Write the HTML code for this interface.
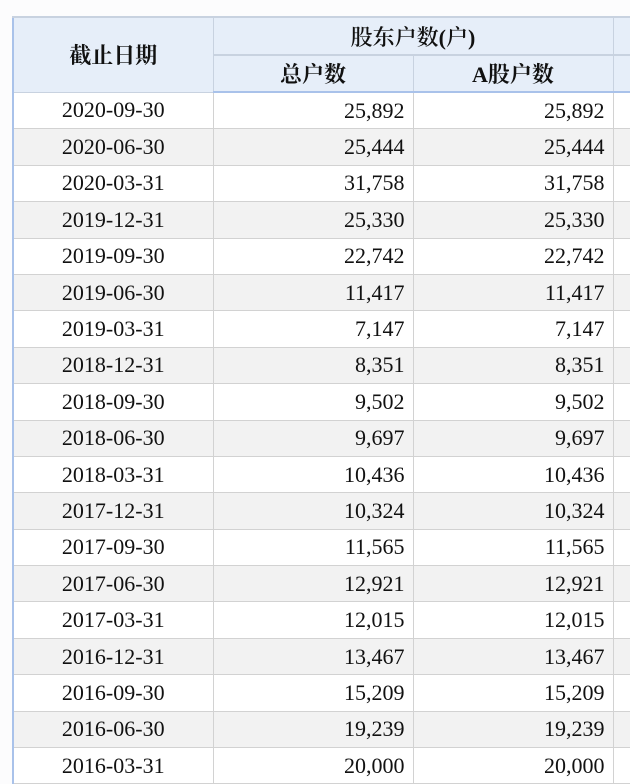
<!DOCTYPE html>
<html><head><meta charset="utf-8"><style>
body{margin:0;width:630px;height:755px;overflow:hidden;background:#fcfcfd;font-family:"Liberation Serif","Noto Serif CJK SC",serif;color:#111}
table{position:absolute;left:12px;top:16px;width:660px;border-collapse:collapse;table-layout:fixed;border-left:2px solid #a9c2ea}
td,th{border:1px solid #d2d2d2;font-size:22px;padding:0;overflow:hidden;white-space:nowrap}
th{background:#e6eef9;font-family:"Liberation Serif","Noto Serif CJK SC",serif;font-weight:bold;font-size:22px;border-top:2px solid #a9c2ea;border-color:#c8d2e0}
thead tr:last-child th{border-bottom:2px solid #a9c2ea}
td{height:35.4px;text-align:right;padding-right:8px}
td.d{text-align:center;padding-right:0}
tbody tr:nth-child(even) td{background:#f2f2f2}
tbody tr:nth-child(odd) td{background:#fff}
</style></head><body>
<table>
<colgroup><col style="width:200px"><col style="width:200px"><col style="width:200px"><col style="width:60px"></colgroup>
<thead>
<tr style="height:38px"><th rowspan="2">截止日期</th><th colspan="2" style="font-weight:600">股东户数(户)</th><th></th></tr>
<tr style="height:37px"><th>总户数</th><th>A股户数</th><th></th></tr>
</thead>
<tbody>
<tr><td class="d">2020-09-30</td><td>25,892</td><td>25,892</td><td></td></tr>
<tr><td class="d">2020-06-30</td><td>25,444</td><td>25,444</td><td></td></tr>
<tr><td class="d">2020-03-31</td><td>31,758</td><td>31,758</td><td></td></tr>
<tr><td class="d">2019-12-31</td><td>25,330</td><td>25,330</td><td></td></tr>
<tr><td class="d">2019-09-30</td><td>22,742</td><td>22,742</td><td></td></tr>
<tr><td class="d">2019-06-30</td><td>11,417</td><td>11,417</td><td></td></tr>
<tr><td class="d">2019-03-31</td><td>7,147</td><td>7,147</td><td></td></tr>
<tr><td class="d">2018-12-31</td><td>8,351</td><td>8,351</td><td></td></tr>
<tr><td class="d">2018-09-30</td><td>9,502</td><td>9,502</td><td></td></tr>
<tr><td class="d">2018-06-30</td><td>9,697</td><td>9,697</td><td></td></tr>
<tr><td class="d">2018-03-31</td><td>10,436</td><td>10,436</td><td></td></tr>
<tr><td class="d">2017-12-31</td><td>10,324</td><td>10,324</td><td></td></tr>
<tr><td class="d">2017-09-30</td><td>11,565</td><td>11,565</td><td></td></tr>
<tr><td class="d">2017-06-30</td><td>12,921</td><td>12,921</td><td></td></tr>
<tr><td class="d">2017-03-31</td><td>12,015</td><td>12,015</td><td></td></tr>
<tr><td class="d">2016-12-31</td><td>13,467</td><td>13,467</td><td></td></tr>
<tr><td class="d">2016-09-30</td><td>15,209</td><td>15,209</td><td></td></tr>
<tr><td class="d">2016-06-30</td><td>19,239</td><td>19,239</td><td></td></tr>
<tr><td class="d">2016-03-31</td><td>20,000</td><td>20,000</td><td></td></tr>
</tbody>
</table>
</body></html>
